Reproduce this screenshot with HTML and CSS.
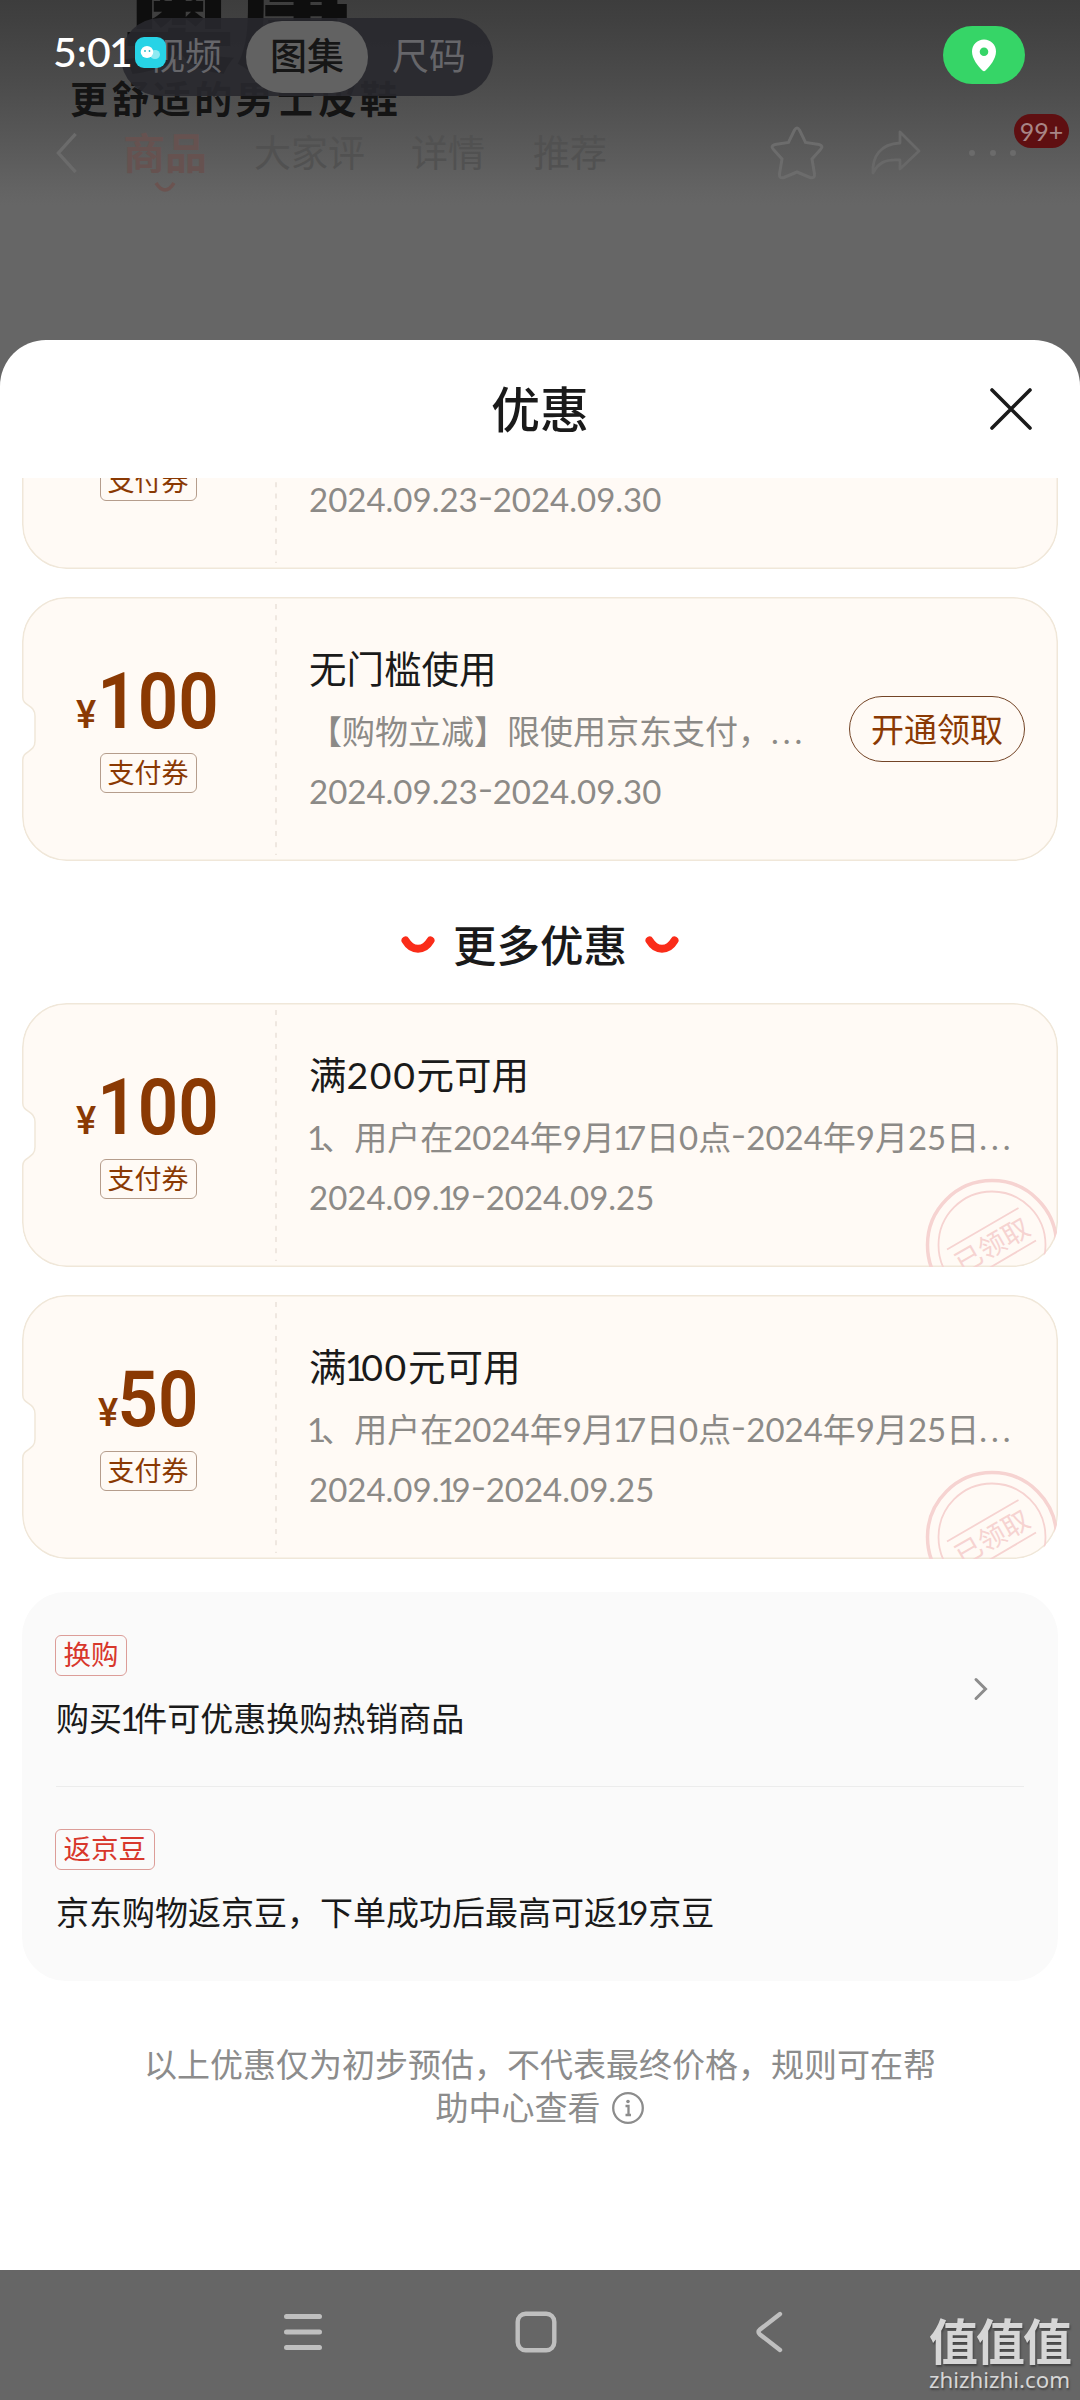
FILE: index.html
```html
<!DOCTYPE html>
<html lang="zh-CN">
<head>
<meta charset="utf-8">
<title>优惠</title>
<link rel="stylesheet" href="styles.css">
</head>
<body>
<svg class="defs" aria-hidden="true">
  <symbol id="ticket" viewBox="0 0 1036 264">
    <path d="M45 .75H991A44.25 44.25 0 0 1 1035.25 45V219A44.25 44.25 0 0 1 991 263.25H45A44.25 44.25 0 0 1 .75 219V163C.75 153 13 156 13 144V119C13 107 .75 110 .75 100V45A44.25 44.25 0 0 1 45 .75Z" fill="#fffaf5" stroke="#f0e7d9" stroke-width="1.5"/>
    <path d="M254 7V258" stroke="#ebe3db" stroke-width="1.6" stroke-dasharray="5 6.35"/>
  </symbol>
  <symbol id="stamp" viewBox="0 0 134 134">
    <g fill="none" stroke="#f6d3d1">
      <circle cx="67" cy="67" r="64.5" stroke-width="3.5"/>
      <circle cx="67" cy="67" r="53.5" stroke-width="1.8"/>
      <path d="M22 71.5L93.500 30M40.500 104L111 62.500" stroke-width="1.8"/>
    </g>
  </symbol>
  <symbol id="smile" viewBox="0 0 34 18">
    <path d="M4.500 4.500C11 15.500 23 15.500 29.500 4.500" fill="none" stroke="#fa2c19" stroke-width="8" stroke-linecap="round"/>
  </symbol>
</svg>
<div class="screen">
  <header class="top">
    <div class="brand">奥康</div>
    <div class="slogan">更舒适的男士皮鞋</div>
    <div class="media-tabs">
      <span class="media-tab">视频</span>
      <span class="media-tab active">图集</span>
      <span class="media-tab">尺码</span>
    </div>
    <div class="status">
      <span class="clock">5:0<span class="one">1</span></span>
      <svg class="app" viewBox="0 0 31 31"><rect width="31" height="31" rx="9" fill="#27d3e6"/><ellipse cx="20" cy="17.500" rx="5" ry="4.500" fill="#8eeaf2"/><ellipse cx="12" cy="15" rx="6.300" ry="6" fill="#fff"/><circle cx="10" cy="14" r=".9" fill="#27b8c8"/><circle cx="14.500" cy="14" r=".9" fill="#27b8c8"/></svg>
      <span class="location"><svg width="26" height="33" viewBox="0 0 26 33"><path fill="#fff" fill-rule="evenodd" d="M13 .5A12 12 0 0 1 25 12.500C25 20 19 27 14.500 31.500Q13 33 11.500 31.500C7 27 1 20 1 12.500A12 12 0 0 1 13 .5ZM13 8.500a4.300 4.300 0 1 0 0 8.600a4.300 4.300 0 0 0 0-8.600Z"/></svg></span>
    </div>
    <nav class="tabs">
      <svg class="back" viewBox="0 0 26 46"><path d="M22 3L4 23L22 43" fill="none" stroke="#6b6b6b" stroke-width="3.500"/></svg>
      <span class="tab current">商品<svg class="tick" viewBox="0 0 22 12"><path d="M2 2Q11 16 20 2" fill="none" stroke="#6b5350" stroke-width="3.500"/></svg></span>
      <span class="tab t2">大家评</span>
      <span class="tab t3">详情</span>
      <span class="tab t4">推荐</span>
      <svg class="star" viewBox="0 0 54 54"><path d="M24.500 4Q27 0 29.500 4L35.500 16.500L49 18.500Q54 20 50.500 23.500L42 33L44.500 48Q45 53 40 51.500L27 46L14 51.500Q9 53 9.500 48L12 33L3.500 23.500Q0 20 5 18.500L18.500 16.500Z" fill="none" stroke="#6c6c6c" stroke-width="3"/></svg>
      <svg class="share" viewBox="0 0 52 48"><path d="M30 3L49 22L30 40V31C15 30 8 34 3 44C2 28 10 15 30 14Z" fill="none" stroke="#686868" stroke-width="2.800" stroke-linejoin="round"/></svg>
      <svg class="dots" viewBox="0 0 50 10"><g fill="#6b6b6b"><circle cx="4" cy="5" r="3"/><circle cx="25" cy="5" r="3"/><circle cx="45" cy="5" r="3"/></g></svg>
      <span class="badge">99+</span>
    </nav>
  </header>

  <section class="sheet">
    <div class="sheet-head">
      <h1>优惠</h1>
      <svg class="close" viewBox="0 0 44 44"><path d="M3 3L41 41M41 3L3 41" stroke="#1a1a1a" stroke-width="3.600" stroke-linecap="round"/></svg>
    </div>
    <div class="sheet-body">
      <div class="coupons first">
        <article class="coupon">
          <svg class="shape"><use href="#ticket"/></svg>
          <div class="value"><div class="price"><i>¥</i><b>100</b></div><span class="tag">支付券</span></div>
          <div class="info"><h3>无门槛使用</h3><p class="desc">【购物立减】限使用京东支付，<span class="dotted">...</span></p><p class="date">2024.09.23<span class="dash">-</span>2024.09.30</p></div>
        </article>
        <article class="coupon">
          <svg class="shape"><use href="#ticket"/></svg>
          <div class="value"><div class="price"><i>¥</i><b>100</b></div><span class="tag">支付券</span></div>
          <div class="info"><h3>无门槛使用</h3><p class="desc">【购物立减】限使用京东支付，<span class="dotted">...</span></p><p class="date">2024.09.23<span class="dash">-</span>2024.09.30</p></div>
          <button class="claim">开通领取</button>
        </article>
      </div>
      <h2 class="more"><svg><use href="#smile"/></svg><span>更多优惠</span><svg><use href="#smile"/></svg></h2>
      <div class="coupons">
        <article class="coupon">
          <svg class="shape"><use href="#ticket"/></svg>
          <div class="value"><div class="price"><i>¥</i><b>100</b></div><span class="tag">支付券</span></div>
          <div class="info"><h3>满<span class="num">200</span>元可用</h3><p class="desc"><span class="one">1</span>、用户在2024年9月<span class="one">1</span>7日0点<span class="dash">-</span>2024年9月25日<span class="dotted">...</span></p><p class="date">2024.09.<span class="one">1</span>9<span class="dash">-</span>2024.09.25</p></div>
          <div class="received"><svg><use href="#stamp"/></svg><span>已领取</span></div>
        </article>
        <article class="coupon">
          <svg class="shape"><use href="#ticket"/></svg>
          <div class="value"><div class="price"><i>¥</i><b>50</b></div><span class="tag">支付券</span></div>
          <div class="info"><h3>满<span class="one">1</span><span class="num">00</span>元可用</h3><p class="desc"><span class="one">1</span>、用户在2024年9月<span class="one">1</span>7日0点<span class="dash">-</span>2024年9月25日<span class="dotted">...</span></p><p class="date">2024.09.<span class="one">1</span>9<span class="dash">-</span>2024.09.25</p></div>
          <div class="received"><svg><use href="#stamp"/></svg><span>已领取</span></div>
        </article>
      </div>
      <div class="panel">
        <div class="offer">
          <div class="offer-text"><span class="label">换购</span><p>购买<span class="one">1</span>件可优惠换购热销商品</p></div>
          <svg class="arrow" viewBox="0 0 16 26"><path d="M3 3.500L12.500 13L3 22.500" fill="none" stroke="#8c8c8c" stroke-width="3" stroke-linecap="round"/></svg>
        </div>
        <div class="offer">
          <div class="offer-text"><span class="label">返京豆</span><p>京东购物返京豆，下单成功后最高可返<span class="one">1</span>9京豆</p></div>
        </div>
      </div>
      <div class="note">
        <p>以上优惠仅为初步预估，不代表最终价格，规则可在帮</p>
        <p>助中心查看<svg viewBox="0 0 34 34"><circle cx="17" cy="17" r="14.800" fill="none" stroke="#8c8c8c" stroke-width="2.300"/><circle cx="17" cy="10.500" r="1.800" fill="#8c8c8c"/><path d="M14.500 15H17.500V24M14.500 24H20" fill="none" stroke="#8c8c8c" stroke-width="2.300"/></svg></p>
      </div>
    </div>
  </section>

  <footer class="navbar">
    <svg viewBox="0 0 46 46"><path d="M6.500 7.500H39.500M6.500 23H39.500M6.500 38.500H39.500" stroke="#bfbfbf" stroke-width="5" stroke-linecap="round"/></svg>
    <svg viewBox="0 0 46 46"><rect x="4.700" y="4.700" width="36.600" height="36.600" rx="8" fill="none" stroke="#bfbfbf" stroke-width="4.400"/></svg>
    <svg viewBox="0 0 46 46"><path d="M34 5L14 20.500Q11 23 14 25.500L34 41" fill="none" stroke="#bfbfbf" stroke-width="4.400" stroke-linecap="round"/></svg>
    <div class="watermark"><span class="wm-name">值值值</span><span class="wm-site">zhizhizhi.com</span></div>
  </footer>
</div>
</body>
</html>
```
FILE: styles.css
```css
* { box-sizing: border-box; margin: 0; padding: 0; }
body { background: #666; font-family: Lato, "Noto Sans CJK SC", sans-serif; white-space: nowrap; }
svg { display: block; flex: none; }
.defs { position: absolute; width: 0; height: 0; }
.screen { width: 1080px; height: 2400px; display: flex; flex-direction: column; overflow: hidden; background: #666; }

/* the digit 1 is set narrower than the other figures */
.one { letter-spacing: -5px; margin-left: -2px; }
.num { letter-spacing: 1.6px; }

/* dimmed product page */
.top { position: relative; height: 340px; flex: none; overflow: hidden; background: linear-gradient(#3d3d3d 0, #404040 20px, #4c4c4c 85px, #595959 145px, #636363 188px, #666 205px); }
.brand { position: absolute; left: 122px; top: -47px; font-size: 114px; line-height: 130px; font-weight: 900; color: #0e0e0e; }
.slogan { position: absolute; left: 70px; top: 70px; font-size: 38px; line-height: 56px; letter-spacing: 3.4px; font-weight: 700; color: #141414; }
.media-tabs { position: absolute; left: 121px; top: 18px; width: 372px; height: 78px; padding: 3px; border-radius: 39px; background: rgba(40, 40, 45, .9); display: flex; }
.media-tab { width: 122px; height: 72px; line-height: 70px; border-radius: 36px; text-align: center; font-size: 37px; color: #66666a; }
.media-tab.active { background: #626262; color: #161616; font-weight: 500; }
.status { position: relative; height: 110px; padding: 0 55px 0 53px; display: flex; align-items: center; }
.clock { width: 82px; margin-top: -7px; font-size: 41px; line-height: 50px; color: #fff; font-weight: 500; }
.app { width: 31px; height: 31px; margin-top: -6px; }
.location { margin-left: auto; width: 82px; height: 58px; border-radius: 29px; background: #36d567; display: flex; align-items: center; justify-content: center; }
.tabs { position: relative; height: 86px; display: flex; align-items: center; padding-left: 54px; }
.back { width: 26px; height: 44px; }
.tab { font-size: 37px; line-height: 56px; color: #515151; }
.tab.current { position: relative; margin-left: 43px; font-size: 42px; font-weight: 700; color: #665250; }
.tick { position: absolute; left: 31px; top: 56px; width: 22px; height: 12px; }
.t2 { margin-left: 47px; }
.t3 { margin-left: 46px; }
.t4 { margin-left: 48px; }
.star { width: 54px; height: 54px; margin-left: 163px; }
.share { width: 52px; height: 48px; margin-left: 46px; }
.dots { width: 50px; height: 10px; margin-left: 46px; }
.badge { position: absolute; left: 1014px; top: 4px; width: 55px; height: 34px; border-radius: 17px; background: #5f0f11; color: #a88586; font-size: 25px; line-height: 34px; text-align: center; }

/* bottom sheet */
.sheet { height: 1930px; flex: none; background: #fff; border-radius: 46px 46px 0 0; overflow: hidden; }
.sheet-head { height: 138px; padding: 0 47px; display: grid; grid-template-columns: 44px 1fr 44px; align-items: center; }
.sheet-head h1 { grid-column: 2; text-align: center; font-size: 49px; font-weight: 500; color: #1a1a1a; line-height: 70px; }
.close { width: 44px; height: 44px; }
.sheet-body { height: 1792px; overflow: hidden; padding: 0 22px; }
.coupons { display: flex; flex-direction: column; gap: 28px; }
.coupons.first { margin-top: -173px; }
.coupon { position: relative; height: 264px; display: flex; overflow: hidden; border-radius: 44px; }
.shape { position: absolute; left: 0; top: 0; width: 1036px; height: 264px; }
.value { position: relative; width: 254px; padding: 75px 2px 0 0; display: flex; flex-direction: column; align-items: center; color: #8a3903; }
.price { height: 81px; display: flex; align-items: baseline; font-family: Roboto, sans-serif; line-height: 60px; }
.price i { font-style: normal; font-size: 38px; font-weight: 500; }
.price b { margin: 0 -4px; font-size: 77px; font-weight: 600; transform: scaleX(.92); }
.tag { width: 97px; height: 40px; border: 1px solid #b59d8c; border-radius: 6px; text-align: center; font-size: 27px; line-height: 37px; }
.info { position: relative; padding: 47px 0 0 33px; color: #8c8a87; font-size: 33px; line-height: 60px; }
.info h3 { height: 57px; font-size: 37.5px; line-height: 50px; font-weight: 400; color: #1a1a1a; }
.dotted { letter-spacing: 4px; }
.dash { display: inline-block; width: 15px; text-align: center; transform: scaleX(1.3) translateY(-3px); }
.claim { position: relative; margin: auto 33px auto auto; width: 176px; height: 66px; border: 1.5px solid #734426; border-radius: 33px; background: none; color: #8a3903; font: inherit; font-size: 33px; line-height: 60px; }
.received { position: absolute; left: 903px; top: 175px; width: 134px; height: 134px; }
.received svg { width: 134px; height: 134px; }
.received span { position: absolute; left: 17px; top: 49px; width: 100px; font-size: 27px; line-height: 36px; text-align: center; color: #f6d3d1; transform: rotate(-30deg); }
.more { height: 142px; padding-top: 26px; display: flex; align-items: center; justify-content: center; gap: 18px; font-size: 43.5px; font-weight: 500; color: #1a1a1a; line-height: 64px; }
.more svg { width: 34px; height: 18px; }

/* extra offers */
.panel { margin-top: 33px; height: 389px; border-radius: 44px; background: #fafafa; padding: 0 34px; }
.offer { height: 194px; display: flex; align-items: center; justify-content: space-between; }
.offer + .offer { border-top: 1.5px solid #ececec; height: 193px; }
.offer-text { display: flex; flex-direction: column; align-items: flex-start; gap: 17px; }
.label { height: 41px; margin-left: -1px; padding: 0 7.5px; border: 1px solid #dc9d98; border-radius: 6px; font-size: 27.5px; line-height: 37px; color: #d8372c; }
.offer p { font-size: 33px; line-height: 50px; color: #1a1a1a; }
.arrow { width: 16px; height: 26px; margin-right: 35px; }
.note { margin-top: 62px; font-size: 33px; line-height: 43px; color: #8c8c8c; }
.note p { display: flex; justify-content: center; align-items: center; }
.note svg { width: 34px; height: 34px; margin-left: 10px; }

/* system navigation */
.navbar { position: relative; height: 130px; flex: none; padding: 39px 0 0 280px; display: flex; gap: 187px; background: #666; }
.navbar > svg { width: 46px; height: 46px; }
.watermark { position: absolute; left: 929px; top: 43px; display: flex; flex-direction: column; color: #d6d6d6; text-shadow: 1px 2px 2px #444; }
.wm-name { font-size: 49px; line-height: 56px; font-weight: 700; letter-spacing: -2px; }
.wm-site { font-family: "Noto Sans", sans-serif; font-size: 22.3px; line-height: 22px; }
```
